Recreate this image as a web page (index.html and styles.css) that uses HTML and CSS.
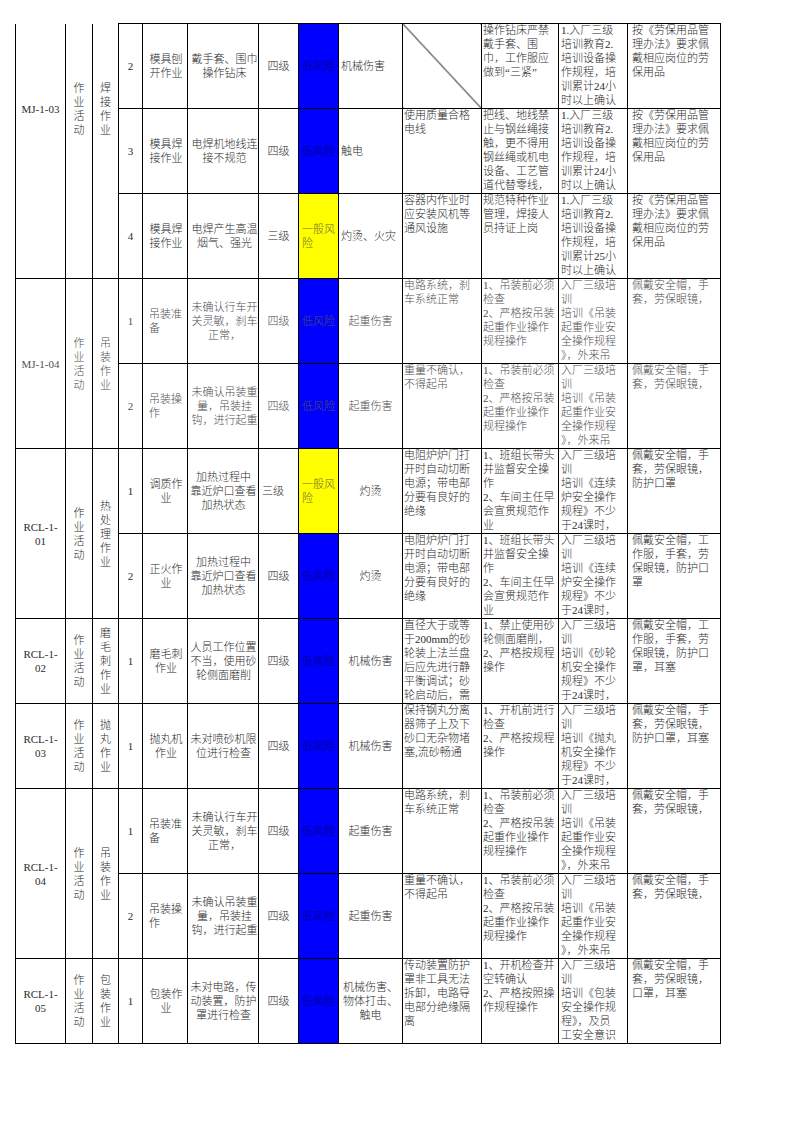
FILE: index.html
```html
<!DOCTYPE html>
<html lang="zh">
<head>
<meta charset="utf-8">
<title>风险分级管控清单</title>
<link rel="stylesheet" href="styles.css">
</head>
<body>
<table class="sheet">
  <colgroup>
    <col class="w1"><col class="w2"><col class="w3"><col class="w4"><col class="w5"><col class="w6"><col class="w7">
    <col class="w8"><col class="w9"><col class="w10"><col class="w11"><col class="w12"><col class="w13">
  </colgroup>
  <tbody>
    <!-- MJ-1-03 -->
    <tr>
      <td rowspan="3" class="id cont"><div class="cont-id">MJ-1-03</div></td>
      <td rowspan="3" class="vt cont"><div class="cont-vt">作<br>业<br>活<br>动</div></td>
      <td rowspan="3" class="vt cont"><div class="cont-vt">焊<br>接<br>作<br>业</div></td>
      <td class="n">2</td>
      <td class="task">模具刨<br>开作业</td>
      <td class="desc">戴手套、围巾<br>操作钻床</td>
      <td class="lvl">四级</td>
      <td class="risk low">低风险</td>
      <td class="harm left">机械伤害</td>
      <td class="diag"></td>
      <td class="top c11"><div class="tx">操作钻床严禁<br>戴手套、围<br>巾，工作服应<br>做到“三紧”</div></td>
      <td class="top c12"><div class="tx">1.入厂三级<br>培训教育2.<br>培训设备操<br>作规程，培<br>训累计24小<br>时以上确认</div></td>
      <td class="top c13"><div class="tx">按《劳保用品管<br>理办法》要求佩<br>戴相应岗位的劳<br>保用品</div></td>
    </tr>
    <tr>
      <td class="n">3</td>
      <td class="task">模具焊<br>接作业</td>
      <td class="desc">电焊机地线连<br>接不规范</td>
      <td class="lvl">四级</td>
      <td class="risk low">低风险</td>
      <td class="harm left">触电</td>
      <td class="top c10"><div class="tx">使用质量合格<br>电线</div></td>
      <td class="top c11"><div class="tx">把线、地线禁<br>止与钢丝绳接<br>触，更不得用<br>钢丝绳或机电<br>设备、工艺管<br>道代替零线，</div></td>
      <td class="top c12"><div class="tx">1.入厂三级<br>培训教育2.<br>培训设备操<br>作规程，培<br>训累计24小<br>时以上确认</div></td>
      <td class="top c13"><div class="tx">按《劳保用品管<br>理办法》要求佩<br>戴相应岗位的劳<br>保用品</div></td>
    </tr>
    <tr>
      <td class="n">4</td>
      <td class="task">模具焊<br>接作业</td>
      <td class="desc">电焊产生高温<br>烟气、强光</td>
      <td class="lvl">三级</td>
      <td class="risk mid">一般风<br>险</td>
      <td class="harm left">灼烫、火灾</td>
      <td class="top c10"><div class="tx">容器内作业时<br>应安装风机等<br>通风设施</div></td>
      <td class="top c11"><div class="tx">规范特种作业<br>管理，焊接人<br>员持证上岗</div></td>
      <td class="top c12"><div class="tx">1.入厂三级<br>培训教育2.<br>培训设备操<br>作规程，培<br>训累计25小<br>时以上确认</div></td>
      <td class="top c13"><div class="tx">按《劳保用品管<br>理办法》要求佩<br>戴相应岗位的劳<br>保用品</div></td>
    </tr>

    <!-- MJ-1-04 -->
    <tr class="lt">
      <td rowspan="2" class="id">MJ-1-04</td>
      <td rowspan="2" class="vt">作<br>业<br>活<br>动</td>
      <td rowspan="2" class="vt">吊<br>装<br>作<br>业</td>
      <td class="n">1</td>
      <td class="task left">吊装准<br>备</td>
      <td class="desc">未确认行车开<br>关灵敏，刹车<br>正常，</td>
      <td class="lvl">四级</td>
      <td class="risk low">低风险</td>
      <td class="harm">起重伤害</td>
      <td class="top c10"><div class="tx">电路系统，刹<br>车系统正常</div></td>
      <td class="top c11"><div class="tx">1、吊装前必须<br>检查<br>2、严格按吊装<br>起重作业操作<br>规程操作</div></td>
      <td class="top c12"><div class="tx">入厂三级培<br>训<br>培训《吊装<br>起重作业安<br>全操作规程<br>》，外来吊</div></td>
      <td class="top c13"><div class="tx">佩戴安全帽，手<br>套，劳保眼镜，</div></td>
    </tr>
    <tr class="lt">
      <td class="n">2</td>
      <td class="task left">吊装操<br>作</td>
      <td class="desc">未确认吊装重<br>量，吊装挂<br>钩，进行起重</td>
      <td class="lvl">四级</td>
      <td class="risk low">低风险</td>
      <td class="harm">起重伤害</td>
      <td class="top c10"><div class="tx">重量不确认，<br>不得起吊</div></td>
      <td class="top c11"><div class="tx">1、吊装前必须<br>检查<br>2、严格按吊装<br>起重作业操作<br>规程操作</div></td>
      <td class="top c12"><div class="tx">入厂三级培<br>训<br>培训《吊装<br>起重作业安<br>全操作规程<br>》，外来吊</div></td>
      <td class="top c13"><div class="tx">佩戴安全帽，手<br>套，劳保眼镜，</div></td>
    </tr>

    <!-- RCL-1-01 -->
    <tr>
      <td rowspan="2" class="id">RCL-1-<br>01</td>
      <td rowspan="2" class="vt">作<br>业<br>活<br>动</td>
      <td rowspan="2" class="vt">热<br>处<br>理<br>作<br>业</td>
      <td class="n">1</td>
      <td class="task">调质作<br>业</td>
      <td class="desc ctr">加热过程中<br>靠近炉口查看<br>加热状态</td>
      <td class="lvl left">三级</td>
      <td class="risk mid">一般风<br>险</td>
      <td class="harm">灼烫</td>
      <td class="top c10"><div class="tx">电阻炉炉门打<br>开时自动切断<br>电源；带电部<br>分要有良好的<br>绝缘</div></td>
      <td class="top c11"><div class="tx">1、班组长带头<br>并监督安全操<br>作<br>2、车间主任早<br>会宣贯规范作<br>业</div></td>
      <td class="top c12"><div class="tx">入厂三级培<br>训<br>培训《连续<br>炉安全操作<br>规程》不少<br>于24课时，</div></td>
      <td class="top c13"><div class="tx">佩戴安全帽，手<br>套，劳保眼镜，<br>防护口罩</div></td>
    </tr>
    <tr>
      <td class="n">2</td>
      <td class="task">正火作<br>业</td>
      <td class="desc ctr">加热过程中<br>靠近炉口查看<br>加热状态</td>
      <td class="lvl">四级</td>
      <td class="risk low">低风险</td>
      <td class="harm">灼烫</td>
      <td class="top c10"><div class="tx">电阻炉炉门打<br>开时自动切断<br>电源；带电部<br>分要有良好的<br>绝缘</div></td>
      <td class="top c11"><div class="tx">1、班组长带头<br>并监督安全操<br>作<br>2、车间主任早<br>会宣贯规范作<br>业</div></td>
      <td class="top c12"><div class="tx">入厂三级培<br>训<br>培训《连续<br>炉安全操作<br>规程》不少<br>于24课时，</div></td>
      <td class="top c13"><div class="tx">佩戴安全帽，工<br>作服，手套，劳<br>保眼镜，防护口<br>罩</div></td>
    </tr>

    <!-- RCL-1-02 -->
    <tr>
      <td class="id">RCL-1-<br>02</td>
      <td class="vt">作<br>业<br>活<br>动</td>
      <td class="vt">磨<br>毛<br>刺<br>作<br>业</td>
      <td class="n">1</td>
      <td class="task">磨毛刺<br>作业</td>
      <td class="desc ctr">人员工作位置<br>不当，使用砂<br>轮侧面磨削</td>
      <td class="lvl">四级</td>
      <td class="risk low">低风险</td>
      <td class="harm">机械伤害</td>
      <td class="top c10"><div class="tx">直径大于或等<br>于200mm的砂<br>轮装上法兰盘<br>后应先进行静<br>平衡调试；砂<br>轮启动后，需</div></td>
      <td class="top c11"><div class="tx">1、禁止使用砂<br>轮侧面磨削，<br>2、严格按规程<br>操作</div></td>
      <td class="top c12"><div class="tx">入厂三级培<br>训<br>培训《砂轮<br>机安全操作<br>规程》不少<br>于24课时，</div></td>
      <td class="top c13"><div class="tx">佩戴安全帽，工<br>作服，手套，劳<br>保眼镜，防护口<br>罩，耳塞</div></td>
    </tr>

    <!-- RCL-1-03 -->
    <tr>
      <td class="id">RCL-1-<br>03</td>
      <td class="vt">作<br>业<br>活<br>动</td>
      <td class="vt">抛<br>丸<br>作<br>业</td>
      <td class="n">1</td>
      <td class="task">抛丸机<br>作业</td>
      <td class="desc ctr">未对喷砂机限<br>位进行检查</td>
      <td class="lvl">四级</td>
      <td class="risk low">低风险</td>
      <td class="harm">机械伤害</td>
      <td class="top c10"><div class="tx">保持钢丸分离<br>器筛子上及下<br>砂口无杂物堵<br>塞,流砂畅通</div></td>
      <td class="top c11"><div class="tx">1、开机前进行<br>检查<br>2、严格按规程<br>操作</div></td>
      <td class="top c12"><div class="tx">入厂三级培<br>训<br>培训《抛丸<br>机安全操作<br>规程》不少<br>于24课时，</div></td>
      <td class="top c13"><div class="tx">佩戴安全帽，手<br>套，劳保眼镜，<br>防护口罩，耳塞</div></td>
    </tr>

    <!-- RCL-1-04 -->
    <tr>
      <td rowspan="2" class="id">RCL-1-<br>04</td>
      <td rowspan="2" class="vt">作<br>业<br>活<br>动</td>
      <td rowspan="2" class="vt">吊<br>装<br>作<br>业</td>
      <td class="n">1</td>
      <td class="task left">吊装准<br>备</td>
      <td class="desc">未确认行车开<br>关灵敏，刹车<br>正常，</td>
      <td class="lvl">四级</td>
      <td class="risk low">低风险</td>
      <td class="harm">起重伤害</td>
      <td class="top c10"><div class="tx">电路系统，刹<br>车系统正常</div></td>
      <td class="top c11"><div class="tx">1、吊装前必须<br>检查<br>2、严格按吊装<br>起重作业操作<br>规程操作</div></td>
      <td class="top c12"><div class="tx">入厂三级培<br>训<br>培训《吊装<br>起重作业安<br>全操作规程<br>》，外来吊</div></td>
      <td class="top c13"><div class="tx">佩戴安全帽，手<br>套，劳保眼镜，</div></td>
    </tr>
    <tr>
      <td class="n">2</td>
      <td class="task left">吊装操<br>作</td>
      <td class="desc">未确认吊装重<br>量，吊装挂<br>钩，进行起重</td>
      <td class="lvl">四级</td>
      <td class="risk low">低风险</td>
      <td class="harm">起重伤害</td>
      <td class="top c10"><div class="tx">重量不确认，<br>不得起吊</div></td>
      <td class="top c11"><div class="tx">1、吊装前必须<br>检查<br>2、严格按吊装<br>起重作业操作<br>规程操作</div></td>
      <td class="top c12"><div class="tx">入厂三级培<br>训<br>培训《吊装<br>起重作业安<br>全操作规程<br>》，外来吊</div></td>
      <td class="top c13"><div class="tx">佩戴安全帽，手<br>套，劳保眼镜，</div></td>
    </tr>

    <!-- RCL-1-05 -->
    <tr>
      <td class="id">RCL-1-<br>05</td>
      <td class="vt">作<br>业<br>活<br>动</td>
      <td class="vt">包<br>装<br>作<br>业</td>
      <td class="n">1</td>
      <td class="task">包装作<br>业</td>
      <td class="desc ctr">未对电路，传<br>动装置，防护<br>罩进行检查</td>
      <td class="lvl">四级</td>
      <td class="risk low">低风险</td>
      <td class="harm">机械伤害、<br>物体打击、<br>触电</td>
      <td class="top c10"><div class="tx">传动装置防护<br>罩非工具无法<br>拆卸，电路导<br>电部分绝缘隔<br>离</div></td>
      <td class="top c11"><div class="tx">1、开机检查并<br>空转确认<br>2、严格按照操<br>作规程操作</div></td>
      <td class="top c12"><div class="tx">入厂三级培<br>训<br>培训《包装<br>安全操作规<br>程》，及员<br>工安全意识</div></td>
      <td class="top c13"><div class="tx">佩戴安全帽，手<br>套，劳保眼镜，<br>口罩，耳塞</div></td>
    </tr>
  </tbody>
</table>
</body>
</html>
```

FILE: styles.css
```css
html, body {
  margin: 0;
  padding: 0;
  background: #fff;
}

body {
  font-family: "Liberation Serif", "Noto Sans CJK SC", serif;
  font-size: 11px;
  font-weight: 300;
  line-height: 14px;
  color: #2b2b2b;
}

.sheet {
  margin: 23px 0 0 15px;
  border-collapse: collapse;
  table-layout: fixed;
  width: 706px;
}

.w1 { width: 50px; }
.w2 { width: 27px; }
.w3 { width: 26px; }
.w4 { width: 24px; }
.w5 { width: 45px; }
.w6 { width: 71px; }
.w7 { width: 40px; }
.w8 { width: 40px; }
.w9 { width: 64px; }
.w10 { width: 79px; }
.w11 { width: 77px; }
.w12 { width: 69px; }
.w13 { width: 93px; }

.sheet tr {
  height: 85px;
}

.sheet td {
  border: 1px solid #000;
  padding: 0;
  white-space: nowrap;
  overflow: hidden;
  vertical-align: middle;
  text-align: center;
}

/* continuation cells of the first section (start on previous page) */
.cont {
  border-top: none !important;
  vertical-align: top !important;
}
.cont-id {
  padding-top: 78px;
}
.cont-vt {
  padding-top: 57px;
}

.lt td {
  color: #505050;
}

.n { text-align: center; }

.task {
  text-align: center;
  padding-left: 2px !important;
}
.task.left {
  text-align: left;
  padding-left: 6px !important;
}

.desc {
  text-align: left;
  padding-left: 3px !important;
}
.desc.ctr {
  text-align: center;
  padding-left: 1px !important;
}

.lvl.left {
  text-align: left;
  padding-left: 3px !important;
}

.risk {
  color: #00006e;
}
.risk.low {
  background: #0000ff;
  text-align: center;
}
.risk.mid {
  background: #ffff00;
  color: #6a6a3a;
  text-align: left;
  padding-left: 3px !important;
}

.harm.left {
  text-align: left;
  padding-left: 2px !important;
}

.diag {
  background: linear-gradient(to top right,
    transparent calc(50% - 0.8px),
    #000 50%,
    transparent calc(50% + 0.8px));
}

.top {
  vertical-align: top !important;
  text-align: left !important;
}
.top .tx {
  margin-top: -1px;
}
.c10 { padding-left: 1px !important; }
.c11 { padding-left: 1px !important; }
.c12 { padding-left: 2px !important; }
.c13 { padding-left: 4px !important; }
```
